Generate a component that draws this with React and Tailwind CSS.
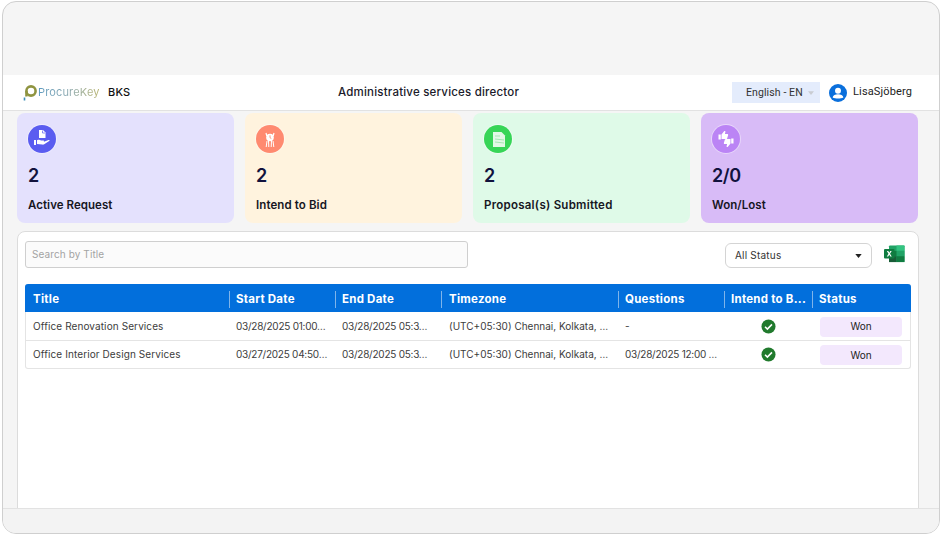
import React from "react";

const HandDoc = () => (
  <svg viewBox="0 0 28 28" className="w-7 h-7" fill="#fff">
    <path d="M11 5h4l2.500 2.500V13H11z" />
    <path d="M14.500 5.500v2.500h2.500" fill="none" stroke="#5a5cf0" strokeWidth="0.7" />
    <path d="M6 15h2v5H6z" />
    <path d="M9 15.300c1.500-.7 2.800-.6 4 .1h2.500c.8 0 .9 1.200 0 1.300h-2.600l3 .1 4.700-1.800c.9-.3 1.300.5.600 1l-5 3.300c-.6.300-1.200.4-1.900.3L9 19z" />
  </svg>
);
const Bid = () => (
  <svg viewBox="0 0 28 28" className="w-7 h-7" fill="#fff">
    <circle cx="14" cy="12.500" r="3.800" />
    <path d="M14 10.300v2.400l1.300.8" stroke="#ff8a70" strokeWidth="0.9" fill="none" />
    <path d="M10 8l.8 3M18 8l-.8 3" stroke="#fff" strokeWidth="1.200" />
    <path d="M11 16l-.8 6M12.500 16l.3 6M15.500 16l-.3 6M17 16l.8 6" stroke="#fff" strokeWidth="1" />
  </svg>
);
const Doc = () => (
  <svg viewBox="0 0 28 28" className="w-7 h-7">
    <path d="M9 7h8.500L21 10.500V22H9z" fill="#e2f8e6" />
    <path d="M11 11h5M11 14l9 1M11 17l9 1" stroke="#a3e8b2" strokeWidth="1" />
  </svg>
);
const Thumbs = () => (
  <svg viewBox="0 0 28 28" className="w-7 h-7" fill="#fff">
    <path d="M6.500 9.500h2.300v5H6.500z" />
    <path d="M9.500 9.600l2.600-3.400c.7-.6 1.500-.1 1.300.8l-.5 1.900h2.300c.8 0 1.100.7.900 1.300l-1 3.200c-.2.500-.5.700-1 .7H9.500z" />
    <path d="M19.200 13.500h2.300v5h-2.300z" />
    <path d="M18.500 18.400l-2.600 3.400c-.7.600-1.500.1-1.300-.8l.5-1.900h-2.300c-.8 0-1.100-.7-.9-1.300l1-3.200c.2-.5.500-.7 1-.7h4.600z" />
  </svg>
);

const cards = [
  { n: "2", label: "Active Request", bg: "bg-[#e4e1fd]", circle: "bg-[#5a5cf0]", Icon: HandDoc, t: "tracking-[0.05px]" },
  { n: "2", label: "Intend to Bid", bg: "bg-[#fff3de]", circle: "bg-[#ff8a70]", Icon: Bid, t: "tracking-[0.1px]" },
  { n: "2", label: "Proposal(s) Submitted", bg: "bg-[#dffae8]", circle: "bg-[#37d557]", Icon: Doc, t: "tracking-[0.25px]" },
  { n: "2/0", label: "Won/Lost", bg: "bg-[#d8bbf7]", circle: "bg-[#bb84f5]", Icon: Thumbs, t: "tracking-[0.05px]" },
];

const cols = ["Title", "Start Date", "End Date", "Timezone", "Questions", "Intend to B...", "Status"];
const rows = [
  ["Office Renovation Services", "03/28/2025 01:00…", "03/28/2025 05:3…", "(UTC+05:30) Chennai, Kolkata, …", "-"],
  ["Office Interior Design Services", "03/27/2025 04:50…", "03/28/2025 05:3…", "(UTC+05:30) Chennai, Kolkata, …", "03/28/2025 12:00 …"],
];

const Check = () => (
  <svg viewBox="0 0 16 16" className="w-[15px] h-[15px]">
    <circle cx="8" cy="8" r="7.500" fill="#217a2d" />
    <path d="M4.300 8.300l2.500 2.400 4.900-5" fill="none" stroke="#fff" strokeWidth="1.700" />
  </svg>
);

const Excel = () => (
  <svg viewBox="0 0 21 20" preserveAspectRatio="none" className="w-[21px] h-[18px]">
    <rect x="5" y="0.500" width="15.500" height="18.500" rx="1" fill="#21a366" />
    <rect x="12.500" y="0.500" width="8" height="6" fill="#33c481" />
    <rect x="12.500" y="6.500" width="8" height="6" fill="#21a366" />
    <rect x="5" y="6.500" width="7.500" height="6" fill="#107c41" />
    <rect x="5" y="12.500" width="7.500" height="6.500" fill="#185c37" />
    <rect x="12.500" y="12.500" width="8" height="6.500" fill="#107c41" />
    <rect x="0" y="4.500" width="10.500" height="10.500" rx="1" fill="#107c41" />
    <path d="M2.800 6.800h1.500l1 1.900 1-1.900h1.400L6 9.700l1.800 3H6.300l-1-2-1.100 2H2.800l1.700-3z" fill="#fff" />
  </svg>
);

export default function App() {
  return (
    <div className="w-[941px] h-[535px] bg-white pt-[1px] pl-[2px] font-['Inter',sans-serif] overflow-hidden">
      <div className="w-[938px] h-[533px] rounded-[14px] border border-[#cfcfcf] bg-[#f5f5f5] overflow-hidden flex flex-col">
        <div className="h-[73px] shrink-0" />
        <header className="h-[36px] shrink-0 bg-white border-b border-[#e2e2e2] flex items-center pl-[20px]">
          <div className="w-[85px] shrink-0 flex items-center gap-[1px]">
            <svg viewBox="0 0 14 16" className="w-[14px] h-[16px] shrink-0">
              <circle cx="8" cy="6" r="4.600" fill="none" stroke="#8f9440" strokeWidth="2.600" />
              <path d="M3.400 6v5.500" stroke="#8f9440" strokeWidth="2.400" />
              <path d="M1.500 12.500v3" stroke="#3d8fb5" strokeWidth="1.600" />
            </svg>
            <span className="text-[11px] tracking-[0.15px] whitespace-nowrap bg-linear-to-r from-[#5f9cc0] via-[#8eaab0] to-[#b9b46f] bg-clip-text text-transparent">ProcureKey</span>
          </div>
          <span className="w-[22px] shrink-0 text-[11px] font-medium text-[#111] tracking-[0.2px]">BKS</span>
          <span className="ml-[208px] w-[394px] shrink-0 text-[11.500px] font-medium text-[#1a1a2a] tracking-[0.2px] whitespace-nowrap">Administrative services director</span>
          <div className="w-[88px] h-[21px] shrink-0 bg-[#e4ecfc] flex items-center pl-[14px] text-[10.500px] text-[#333] font-['Roboto',sans-serif]">
            <span className="tracking-[0.1px] whitespace-nowrap">English - EN</span>
            <svg viewBox="0 0 8 5" className="w-[6px] h-[4px] ml-[5px]"><path d="M0 0h8L4 5z" fill="#c9ccd2" /></svg>
          </div>
          <svg viewBox="0 0 20 20" className="w-[18px] h-[18px] ml-[9px] shrink-0">
            <circle cx="10" cy="10" r="10" fill="#0a6fdc" />
            <circle cx="10" cy="7.500" r="3.300" fill="#fff" />
            <path d="M4 15c.5-2.500 3-3.500 6-3.500s5.500 1 6 3.500c-3 1.600-9 1.600-12 0z" fill="#fff" />
          </svg>
          <span className="ml-[6px] text-[11px] text-[#222] font-['Roboto',sans-serif] tracking-[0.15px] whitespace-nowrap">LisaSjöberg</span>
        </header>

        <div className="flex-1 min-h-0 pl-[14px] pt-[2px]">
          <div className="flex gap-[11px] w-[902px]">
            {cards.map(({ n, label, bg, circle, Icon, t }) => (
              <div key={label} className={`w-[217px] h-[110px] ${bg} rounded-[8px] pl-[11px] pt-[12px]`}>
                <div className={`w-[28px] h-[28px] rounded-full ${circle} ring-1 ring-white/40 flex items-center justify-center`}><Icon /></div>
                <div className="mt-[11px] text-[18px] leading-[24px] font-semibold text-[#11123d] tracking-[-0.4px]">{n}</div>
                <div className={`mt-[9px] text-[11.500px] leading-[16px] font-semibold text-[#16161f] ${t}`}>{label}</div>
              </div>
            ))}
          </div>

          <section className="mt-[8px] w-[902px] h-[280px] bg-white border border-[#dcdcdc] rounded-t-[8px] px-[7px] pt-[9px]">
            <div className="flex items-start">
              <div className="w-[443px] h-[27px] shrink-0 rounded-[3px] border border-[#cfcfcf] bg-[#fbfbfb] flex items-center pl-[6px] text-[10px] text-[#a3a3a3] tracking-[0.1px]">Search by Title</div>
              <div className="ml-[257px] mt-[2px] w-[147px] h-[25px] shrink-0 rounded-[6px] border border-[#d4d4d4] flex items-center justify-between px-[9px] text-[10px] text-[#333] tracking-[0.2px]">
                <span>All Status</span>
                <svg viewBox="0 0 8 5" className="w-[7px] h-[4px]"><path d="M0 0h8L4 5z" fill="#222" /></svg>
              </div>
              <div className="ml-[12px] mt-[4px] shrink-0"><Excel /></div>
            </div>

            <div className="mt-[16px] w-[886px] rounded-[3px] border-x border-b border-[#e4e4e4]">
              <div className="grid grid-cols-[205px_106px_106px_177px_106px_88px_98px] grid-rows-[28px] h-[28px] bg-[#026fdc] rounded-t-[3px] -mx-px w-[886px] items-center">
                {cols.map((c, i) => (
                  <div key={c} className={`mt-[3px] h-[17px] flex items-center text-[11.500px] font-bold text-white tracking-[0.25px] whitespace-nowrap ${i === 0 ? "pl-[8px]" : i === 3 ? "pl-[7px]" : "pl-[6px]"} ${i < 6 ? "border-r border-[#7fb4ea]" : ""}`}>{c}</div>
                ))}
              </div>
              {rows.map((r, ri) => (
                <div key={ri} className={`grid grid-cols-[204px_106px_106px_177px_106px_88px_97px] items-center text-[10px] text-[#3c3c3c] ${ri === 0 ? "grid-rows-[28px] h-[29px] border-b border-[#e4e4e4]" : "grid-rows-[27px] h-[27px]"}`}>
                  {r.map((v, i) => (
                    <div key={i} className={`whitespace-nowrap ${i === 0 ? "pl-[7px] tracking-[0.1px]" : i === 3 ? "pl-[7px] tracking-[0px]" : "pl-[6px] tracking-[-0.25px]"}`}>{v}</div>
                  ))}
                  <div className="flex justify-center pr-[1px]"><Check /></div>
                  <div className="pl-[7px]">
                    <div className="mt-[1px] w-[82px] h-[20px] rounded-[4px] bg-[#f3e8fd] flex items-center justify-center text-[#222]">Won</div>
                  </div>
                </div>
              ))}
            </div>
          </section>
        </div>

        <div className="h-[25px] shrink-0 bg-[#f3f3f3] border-t border-[#e2e2e2] relative z-10" />
      </div>
    </div>
  );
}
